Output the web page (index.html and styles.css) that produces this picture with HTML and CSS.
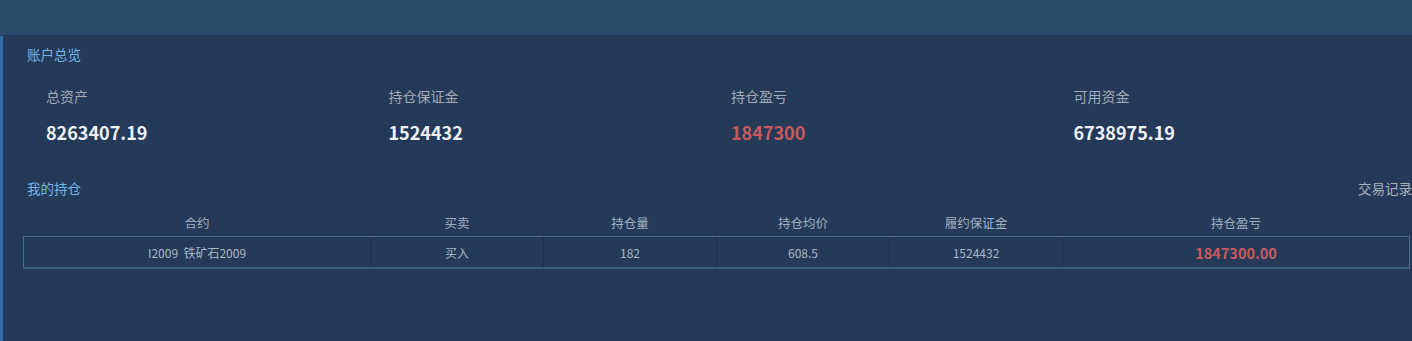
FILE: index.html
```html
<!DOCTYPE html>
<html lang="zh-CN">
<head>
<meta charset="utf-8">
<link rel="stylesheet" href="styles.css">
</head>
<body>
<div class="topbar"></div>
<div class="main">
  <div class="section-title">账户总览</div>
  <div class="summary">
    <div class="stat"><div class="stat-label">总资产</div><div class="stat-value">8263407.19</div></div>
    <div class="stat"><div class="stat-label">持仓保证金</div><div class="stat-value">1524432</div></div>
    <div class="stat"><div class="stat-label">持仓盈亏</div><div class="stat-value red">1847300</div></div>
    <div class="stat"><div class="stat-label">可用资金</div><div class="stat-value">6738975.19</div></div>
  </div>
  <div class="pos-head">
    <div class="section-title">我的持仓</div>
    <div class="link">交易记录</div>
  </div>
  <table class="pos-table">
    <colgroup><col class="c2"><col class="c1"><col class="c1"><col class="c1"><col class="c1"><col class="c2"></colgroup>
    <thead>
      <tr><th>合约</th><th>买卖</th><th>持仓量</th><th>持仓均价</th><th>履约保证金</th><th>持仓盈亏</th></tr>
    </thead>
    <tbody>
      <tr><td>I2009&nbsp;&nbsp;铁矿石2009</td><td>买入</td><td>182</td><td>608.5</td><td>1524432</td><td class="pl">1847300.00</td></tr>
    </tbody>
  </table>
</div>
</body>
</html>
```
FILE: styles.css
```css
html, body {
  margin: 0;
  padding: 0;
  background: #243a58;
  font-family: "Noto Sans CJK SC", "Noto Sans", sans-serif;
  overflow: hidden;
}
.topbar {
  height: 35px;
  background: #2a4a6b;
  border-bottom: 1px solid #22385a;
}
.main {
  box-sizing: border-box;
  height: calc(100vh - 36px);
  border-left: 3px solid #2f6ea8;
  padding: 8px 2px 0 20px;
}
.section-title {
  font-size: 13.5px;
  line-height: 20px;
  color: #74b6ea;
  padding-left: 4px;
}
.summary {
  display: grid;
  grid-template-columns: 342.5px 342.5px 342.5px 1fr;
  padding-left: 23px;
  margin-top: 22px;
}
.stat-label {
  font-size: 14px;
  line-height: 20px;
  color: #a3abb6;
}
.stat-value {
  margin-top: 14px;
  font-size: 18px;
  line-height: 24px;
  font-weight: bold;
  color: #eef2f6;
}
.stat-value.red { color: #c85a5e; }
.pos-head {
  display: flex;
  justify-content: space-between;
  align-items: center;
  margin-top: 34px;
  margin-right: -2px;
}
.link {
  font-size: 13.5px;
  line-height: 20px;
  color: #a9b1bb;
}
.pos-table {
  width: 1387px;
  margin-top: 10px;
  border-collapse: collapse;
  table-layout: fixed;
}
.c1 { width: 173px; }
.c2 { width: 347px; }
.pos-table th {
  height: 28px;
  padding: 0;
  font-weight: normal;
  font-size: 12.5px;
  color: #a2b1c1;
  text-align: center;
  vertical-align: middle;
}
.pos-table td {
  height: 30px;
  padding: 0;
  font-size: 12px;
  color: #a9b7c5;
  text-align: center;
  border-left: 1px solid #1c2f47;
  border-top: 1px solid #4a6d8d;
  border-bottom: 2px solid #3e5f7f;
}
.pos-table td:first-child { border-left: 1px solid #4a6d8d; }
.pos-table td:last-child { border-right: 1px solid #4a6d8d; }
.pos-table td.pl {
  font-size: 14.5px;
  font-weight: bold;
  color: #c85a5e;
}
```
